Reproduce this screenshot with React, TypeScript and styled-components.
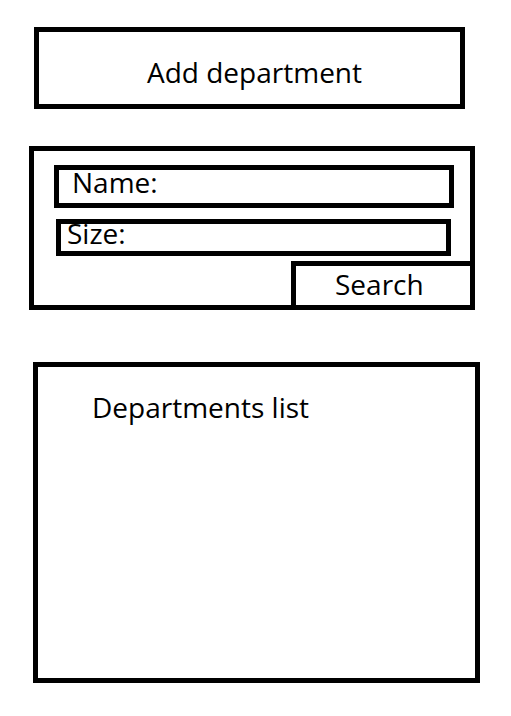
import React from "react";
import styled, { createGlobalStyle } from "styled-components";

const Global = createGlobalStyle`
  html, body { margin: 0; padding: 0; background: #fff; }
  body { font-family: "Open Sans", "Noto Sans", sans-serif; color: #000; }
`;

const Page = styled.div`
  display: flex;
  flex-direction: column;
  align-items: flex-start;
  padding-top: 27px;
  width: 511px;
  height: 716px;
  box-sizing: border-box;
`;

const Frame = styled.div<{ $left: number; $top: number; $w: number; $h: number }>`
  box-sizing: border-box;
  border: 5px solid #000;
  margin-left: ${(p) => p.$left}px;
  margin-top: ${(p) => p.$top}px;
  width: ${(p) => p.$w}px;
  height: ${(p) => p.$h}px;
  display: flex;
  flex-direction: column;
  align-items: flex-start;
`;

const Label = styled.div<{ $padTop: number; $padLeft: number }>`
  font-size: 28px;
  line-height: 1;
  padding-top: ${(p) => p.$padTop}px;
  padding-left: ${(p) => p.$padLeft}px;
  white-space: nowrap;
`;

const Field = styled.div<{ $left: number; $top: number; $w: number; $h: number }>`
  box-sizing: border-box;
  border: 5px solid #000;
  margin-left: ${(p) => p.$left}px;
  margin-top: ${(p) => p.$top}px;
  width: ${(p) => p.$w}px;
  height: ${(p) => p.$h}px;
  overflow: visible;
`;

const FieldText = styled.div<{ $shift: number; $padLeft: number }>`
  font-size: 28px;
  line-height: 1;
  margin-top: ${(p) => p.$shift}px;
  padding-left: ${(p) => p.$padLeft}px;
  white-space: nowrap;
`;

const SearchButton = styled.button`
  box-sizing: border-box;
  align-self: flex-end;
  margin-top: 5px;
  margin-right: -5px;
  margin-bottom: -5px;
  width: 184px;
  height: 49px;
  border: 5px solid #000;
  background: #fff;
  padding: 4px 0 0 39px;
  display: flex;
  align-items: flex-start;
  justify-content: flex-start;
  font-family: "Open Sans", "Noto Sans", sans-serif;
  font-size: 28px;
  line-height: 1;
  color: #000;
  cursor: pointer;
`;

export default function App() {
  return (
    <>
      <Global />
      <Page>
        <Frame $left={34} $top={0} $w={431} $h={82}>
          <Label $padTop={26} $padLeft={108}>Add department</Label>
        </Frame>
        <Frame $left={29} $top={37} $w={446} $h={164}>
          <Field $left={20} $top={14} $w={400} $h={43}>
            <FieldText $shift={-2} $padLeft={13}>Name:</FieldText>
          </Field>
          <Field $left={22} $top={11} $w={395} $h={37}>
            <FieldText $shift={-5} $padLeft={6}>Size:</FieldText>
          </Field>
          <SearchButton>Search</SearchButton>
        </Frame>
        <Frame $left={33} $top={52} $w={447} $h={321}>
          <Label $padTop={26} $padLeft={54}>Departments list</Label>
        </Frame>
      </Page>
    </>
  );
}
